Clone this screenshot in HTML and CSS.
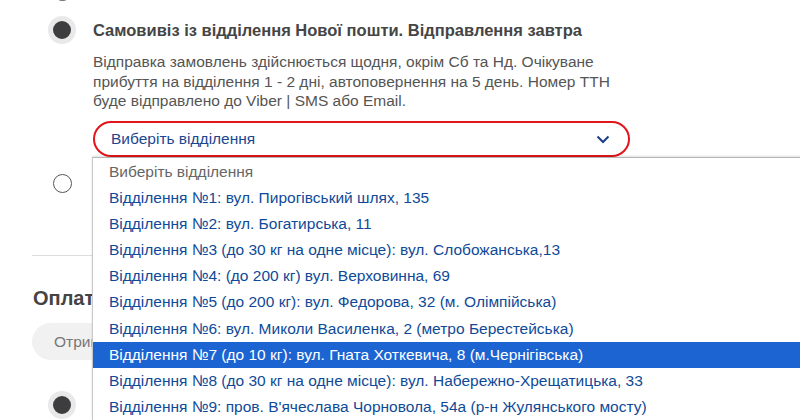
FILE: index.html
```html
<!DOCTYPE html>
<html lang="uk">
<head>
<meta charset="utf-8">
<title>Доставка</title>
<link rel="stylesheet" href="styles.css">
</head>
<body>
<div class="page">
  <div class="option option-prev">
    <div class="radio-col"><span class="radio"></span></div>
    <div class="option-body"><div class="option-title">Кур'єрська доставка</div></div>
  </div>

  <div class="option option-active">
    <div class="radio-col"><span class="radio radio-on"></span></div>
    <div class="option-body">
      <div class="option-title">Самовивіз із відділення Нової пошти. Відправлення завтра</div>
      <p class="option-desc">Відправка замовлень здійснюється щодня, окрім Сб та Нд. Очікуване прибуття на відділення 1 - 2 дні, автоповернення на 5 день. Номер ТТН буде відправлено до Viber | SMS або Email.</p>
      <div class="select-wrap">
        <div class="select">
          <span class="select-value">Виберіть відділення</span>
          <svg class="chevron" width="14" height="9" viewBox="0 0 14 9"><path d="M1.5 1.5 L7 7 L12.5 1.5" fill="none" stroke="#1b3f86" stroke-width="2"/></svg>
        </div>
        <ul class="dropdown">
          <li class="dd-placeholder">Виберіть відділення</li>
          <li>Відділення №1: вул. Пирогівський шлях, 135</li>
          <li>Відділення №2: вул. Богатирська, 11</li>
          <li>Відділення №3 (до 30 кг на одне місце): вул. Слобожанська,13</li>
          <li>Відділення №4: (до 200 кг) вул. Верховинна, 69</li>
          <li>Відділення №5 (до 200 кг): вул. Федорова, 32 (м. Олімпійська)</li>
          <li>Відділення №6: вул. Миколи Василенка, 2 (метро Берестейська)</li>
          <li class="dd-selected">Відділення №7 (до 10 кг): вул. Гната Хоткевича, 8 (м.Чернігівська)</li>
          <li>Відділення №8 (до 30 кг на одне місце): вул. Набережно-Хрещатицька, 33</li>
          <li>Відділення №9: пров. В'ячеслава Чорновола, 54а (р-н Жулянського мосту)</li>
        </ul>
      </div>
    </div>
  </div>

  <div class="option option-next">
    <div class="radio-col"><span class="radio"></span></div>
    <div class="option-body"><div class="option-title">Кур'єрська доставка</div></div>
  </div>

  <hr class="divider">

  <h2 class="section-title">Оплата</h2>
  <div class="pill">Отримати</div>

  <div class="option option-pay">
    <div class="radio-col"><span class="radio radio-on"></span></div>
  </div>
</div>
</body>
</html>
```

FILE: styles.css
```css
* { box-sizing: border-box; }
html, body {
  margin: 0;
  padding: 0;
  background: #fff;
}
body {
  width: 800px;
  height: 420px;
  overflow: hidden;
  font-family: "Liberation Sans", Arial, sans-serif;
  color: #444;
}
.page {
  padding-left: 32px;
  width: 800px;
}
.option {
  display: flex;
  align-items: flex-start;
}
.radio-col {
  width: 61px;
  flex: none;
  display: flex;
  justify-content: center;
  padding-right: 1px;
}
.radio {
  display: block;
  width: 19px;
  height: 19px;
  border: 1.5px solid #555;
  border-radius: 50%;
  background: #fff;
}
.radio-on {
  width: 28px;
  height: 28px;
  border: 5px solid #e9e9e9;
  background: #3d3d3f;
}
.option-body {
  flex: 1;
  min-width: 0;
}
.option-title {
  font-size: 16.5px;
  font-weight: bold;
  line-height: 20px;
  color: #454545;
}
.option-prev {
  margin-top: -24px;
  height: 24px;
}
.option-prev .radio { margin-top: 6px; }
.option-prev .option-title { visibility: hidden; }
.option-active .radio { margin-top: 16px; }
.option-active .option-title { margin-top: 20px; }
.option-desc {
  margin: 12px 0 0;
  font-size: 15.5px;
  line-height: 19.5px;
  color: #555;
  width: 530px;
}
.select-wrap {
  position: relative;
  margin-top: 10px;
  width: 537px;
}
.select {
  height: 36px;
  border: 2px solid #e1151b;
  border-radius: 18px;
  display: flex;
  align-items: center;
  justify-content: space-between;
  padding: 0 18px 0 16px;
}
.select-value {
  font-size: 15.5px;
  color: #1b4790;
}
.chevron { display: block; margin-top: 1px; }
.dropdown {
  position: absolute;
  left: -1px;
  top: 36px;
  width: 720px;
  margin: 0;
  padding: 1px 0 0;
  list-style: none;
  background: #fff;
  border-left: 1px solid #c9c9c9;
  border-top: 1px solid #b5b5b5;
  box-shadow: 0 -1px 2px rgba(0,0,0,0.12);
  z-index: 5;
}
.dropdown li {
  height: 26.2px;
  line-height: 26.2px;
  padding-left: 16px;
  font-size: 15.5px;
  color: #0f4a98;
  white-space: nowrap;
}
.dropdown .dd-placeholder { color: #666; }
.dropdown .dd-selected {
  background: #1b64d2;
  color: #fff;
}
.option-next { margin-top: 17px; }
.option-next .option-title { visibility: hidden; }
.divider {
  margin: 61px 0 0;
  border: 0;
  border-top: 1px solid #dcdcdc;
  width: 740px;
}
.section-title {
  margin: 30px 0 0 1px;
  font-size: 20px;
  line-height: 24px;
  font-weight: bold;
  color: #444;
}
.pill {
  margin-top: 13px;
  width: 300px;
  height: 37px;
  border-radius: 19px;
  background: #f1f1f1;
  color: #777;
  font-size: 15.5px;
  line-height: 37px;
  padding-left: 22px;
}
.option-pay { margin-top: 31px; }
```
